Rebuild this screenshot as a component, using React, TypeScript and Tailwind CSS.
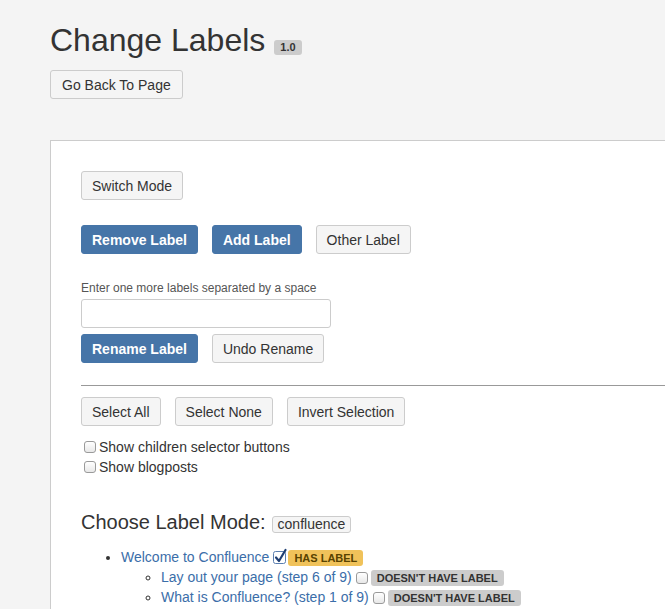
import React from "react";

const grayBtn =
  "h-[29px] px-[10px] flex items-center rounded-[3px] border border-[#ccc] bg-[#f5f5f5] text-[14px] text-[#333] leading-[20px]";
const blueBtn =
  "h-[29px] px-[10px] flex items-center rounded-[3px] border border-[#4675a8] bg-[#4675a8] text-[14px] text-white font-bold leading-[20px]";

function Box({ checked = false, className = "" }: { checked?: boolean; className?: string }) {
  if (checked) {
    return (
      <span className={"relative inline-block w-[13px] h-[13px] align-[-2px] " + className}>
        <svg width="16" height="16" viewBox="0 0 16 16" className="absolute left-0 top-[-3px] overflow-visible">
          <rect x="0.5" y="3.5" width="12" height="12" rx="2" fill="#fff" stroke="#5b7fb0" />
          <path d="M3 9.5 L6 13 L12.5 2" fill="none" stroke="#1f3f73" strokeWidth="2.2" strokeLinecap="round" strokeLinejoin="round" />
        </svg>
      </span>
    );
  }
  return (
    <span
      className={
        "inline-block w-[12px] h-[12px] rounded-[3px] border border-[#9a9a9a] bg-gradient-to-b from-white to-[#e8e8e8] align-[-2px] " +
        className
      }
    />
  );
}

export default function App() {
  return (
    <div className="h-[609px] overflow-hidden bg-[#f4f4f4] pl-[50px] pt-[22px] font-['Liberation_Sans',Arial,sans-serif] text-[#333]">
      <h1 className="text-[32px] leading-[36px] font-normal text-[#333] whitespace-nowrap">
        Change Labels
        <span className="inline-block ml-[9px] h-[15px] leading-[15px] px-[6px] rounded-[3px] bg-[#ccc] text-[11px] font-bold text-[#333] align-baseline">
          1.0
        </span>
      </h1>
      <div className="mt-[12px] flex">
        <button className="h-[29px] px-[11px] flex items-center rounded-[3px] border border-[#ccc] bg-[#f5f5f5] text-[14px] text-[#333] leading-[20px]">
          Go Back To Page
        </button>
      </div>

      <div className="mt-[41px] w-[800px] h-[600px] border border-[#ccc] bg-white pt-[30px] pl-[30px]">
        <div className="flex">
          <button className={grayBtn}>Switch Mode</button>
        </div>
        <div className="mt-[25px] flex gap-[14px]">
          <button className={blueBtn}>Remove Label</button>
          <button className={blueBtn}>Add Label</button>
          <button className={grayBtn}>Other Label</button>
        </div>
        <div className="mt-[26px] text-[12px] leading-[16px] text-[#555]">
          Enter one more labels separated by a space
        </div>
        <div className="mt-[3px] w-[250px] h-[29px] rounded-[3px] border border-[#ccc] bg-white" />
        <div className="mt-[6px] flex gap-[14px]">
          <button className={blueBtn}>Rename Label</button>
          <button className={grayBtn}>Undo Rename</button>
        </div>
        <div className="mt-[22px] border-t border-[#999]" />
        <div className="mt-[11px] flex gap-[14px]">
          <button className={grayBtn}>Select All</button>
          <button className={grayBtn}>Select None</button>
          <button className={grayBtn}>Invert Selection</button>
        </div>
        <div className="mt-[11px] text-[14px] leading-[20px]">
          <div className="flex items-center">
            <Box className="ml-[3px] mr-[3px]" />
            <span>Show children selector buttons</span>
          </div>
          <div className="flex items-center">
            <Box className="ml-[3px] mr-[3px]" />
            <span>Show blogposts</span>
          </div>
        </div>
        <h2 className="mt-[33px] text-[20px] leading-[24px] font-normal whitespace-nowrap">
          Choose Label Mode:
          <span className="inline-block ml-[6px] leading-[15px] px-[5px] border border-[#ccc] rounded-[3px] bg-[#f5f5f5] text-[14px] align-baseline">
            confluence
          </span>
        </h2>
        <ul className="mt-[13px] list-disc pl-[40px] text-[14px] leading-[20px] whitespace-nowrap">
          <li>
            <a className="text-[#3b6ea9]">Welcome to Confluence</a>
            <Box checked className="ml-[4px] mr-[2px]" />
            <span className="inline-block h-[16px] leading-[16px] px-[6px] rounded-[3px] bg-[#f0c25a] text-[#594300] text-[11px] font-bold uppercase">
              Has Label
            </span>
            <ul className="list-[circle] pl-[40px]">
              <li>
                <a className="text-[#3b6ea9]">Lay out your page (step 6 of 9)</a>
                <Box className="ml-[4px] mr-[3px]" />
                <span className="inline-block h-[16px] leading-[16px] px-[6px] rounded-[3px] bg-[#ccc] text-[#333] text-[11px] font-bold uppercase">
                  Doesn't Have Label
                </span>
              </li>
              <li>
                <a className="text-[#3b6ea9]">What is Confluence? (step 1 of 9)</a>
                <Box className="ml-[4px] mr-[3px]" />
                <span className="inline-block h-[16px] leading-[16px] px-[6px] rounded-[3px] bg-[#ccc] text-[#333] text-[11px] font-bold uppercase">
                  Doesn't Have Label
                </span>
              </li>
            </ul>
          </li>
        </ul>
      </div>
    </div>
  );
}
